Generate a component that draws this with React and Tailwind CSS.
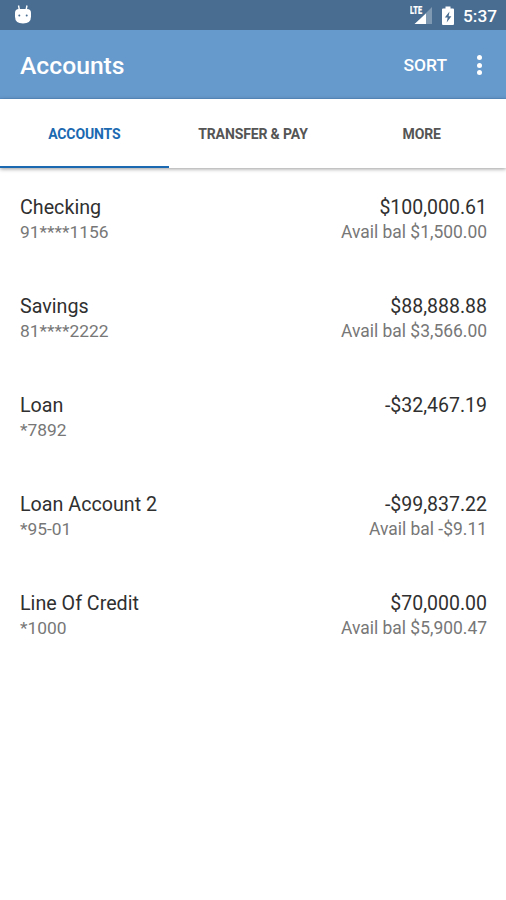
const accounts = [
  { name: "Checking", number: "91****1156", balance: "$100,000.61", available: "Avail bal $1,500.00" },
  { name: "Savings", number: "81****2222", balance: "$88,888.88", available: "Avail bal $3,566.00" },
  { name: "Loan", number: "*7892", balance: "-$32,467.19", available: "" },
  { name: "Loan Account 2", number: "*95-01", balance: "-$99,837.22", available: "Avail bal -$9.11" },
  { name: "Line Of Credit", number: "*1000", balance: "$70,000.00", available: "Avail bal $5,900.47" },
];

function StatusBar() {
  return (
    <div className="flex h-[30px] items-center bg-[#486d91] pl-[14px] pr-[9px] text-white">
      <svg width="18" height="20" viewBox="0 0 18 20" fill="#fff">
        <path d="M1 8Q1 4 5 4h8Q17 4 17 8v3.500Q17 18.500 9 18.500T1 11.500z" />
        <path d="M4.500.500l.8 4M13 .5l-.8 4" stroke="#fff" strokeWidth="1.4" />
        <circle cx="5.300" cy="10.500" r="1" fill="#486d91" />
        <circle cx="12.700" cy="10.500" r="1" fill="#486d91" />
      </svg>
      <svg className="ml-auto" width="24" height="20" viewBox="0 0 24 20">
        <path d="M22 2v17H5z" fill="#fff" fillOpacity=".3" />
        <path d="M16 8.500V19H4.500z" fill="#fff" />
        <text x="0" y="8.800" fontSize="10" fontWeight="900" fontFamily="Roboto, sans-serif" fill="#fff" stroke="#fff" strokeWidth=".2" textLength="12" lengthAdjust="spacingAndGlyphs">LTE</text>
      </svg>
      <svg className="ml-[8px]" width="12" height="19" viewBox="0 0 12 19">
        <path d="M3.500 0.500h5v2H11q1 0 1 1V18q0 1-1 1H1q-1 0-1-1V3.500q0-1 1-1h2.500z" fill="#fff" />
        <path d="M7.500 5.500L2.800 11.500h2.900L4.700 16.500l4.700-6.300H6.600z" fill="#486d91" />
      </svg>
      <span className="ml-[9px] w-[34px] whitespace-nowrap pt-[3px] text-[17.300px] font-medium leading-none">5:37</span>
    </div>
  );
}

export default function App() {
  return (
    <div className="h-[900px] w-[506px] overflow-hidden bg-white font-['Roboto',sans-serif]">
      <StatusBar />
      <header className="flex h-[69px] items-center border-b border-[#5c92c9] bg-[#6699cc] pl-5 pr-6 pt-[2px] text-white">
        <h1 className="pt-px text-[24.700px] font-medium">Accounts</h1>
        <button className="ml-auto text-[17.400px] font-medium">SORT</button>
        <div className="ml-[30px] flex flex-col gap-[2.500px]">
          {[0, 1, 2].map((dot) => (
            <span key={dot} className="size-[5px] rounded-full bg-white" />
          ))}
        </div>
      </header>
      <nav className="grid h-[69px] grid-cols-3 bg-white text-[14px] font-bold tracking-[-0.13px] text-[#555] shadow-[0_1px_4px_rgba(0,0,0,0.4)]">
        <button className="border-b-2 border-[#1b69b1] pt-[3px] text-[#1b69b1]">ACCOUNTS</button>
        <button className="border-b-2 border-transparent pt-[3px]">TRANSFER &amp; PAY</button>
        <button className="border-b-2 border-transparent pt-[3px]">MORE</button>
      </nav>
      <main className="pt-[27px]">
        {accounts.map((account) => (
          <div key={account.name} className="flex h-[99px] justify-between pl-5 pr-[19px]">
            <div>
              <div className="text-[19.700px] leading-[26px] text-[#303030]">{account.name}</div>
              <div className="text-[17.400px] leading-[23px] text-[#777]">{account.number}</div>
            </div>
            <div className="text-right">
              <div className="text-[19.500px] leading-[26px] text-[#303030]">{account.balance}</div>
              <div className="text-[17.450px] leading-[23px] text-[#777]">{account.available}</div>
            </div>
          </div>
        ))}
      </main>
    </div>
  );
}
